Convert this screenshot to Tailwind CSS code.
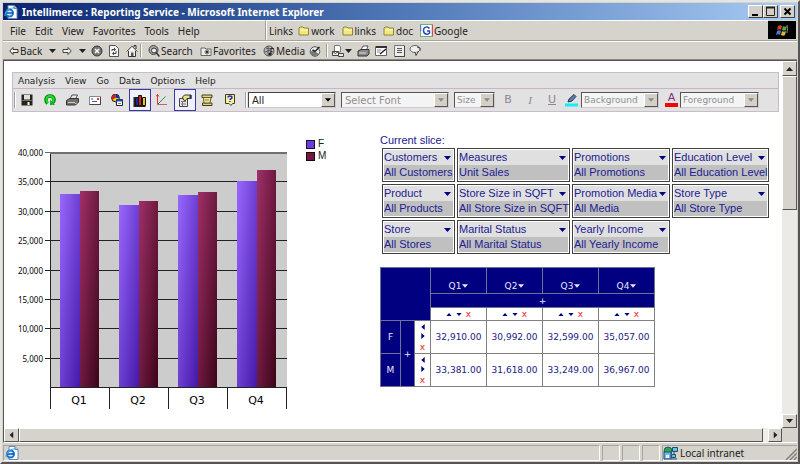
<!DOCTYPE html>
<html lang="en">
<head>
  <meta charset="UTF-8" />
  <title>Intellimerce : Reporting Service</title>
  <meta name="viewport" content="width=device-width, initial-scale=1.0" />
  <script src="https://cdn.jsdelivr.net/npm/@tailwindcss/browser@4"></script>
</head>
<body class="bg-[#d6d3cc] font-['Noto_Sans',sans-serif] text-[10px] leading-[14px] text-[#222]">

  <!-- shared glyphs -->
  <svg class="hidden">
    <symbol id="down" viewBox="0 0 7 4"><path d="M0 0h7L3.500 4z" fill="currentColor" /></symbol>
    <symbol id="folder" viewBox="0 0 12 10">
      <path d="M1 2l1-1h3l1 1h4.500v7H1z" fill="#f0e878" stroke="#8a8440" />
      <path d="M2 4h8" stroke="#fffbc8" />
    </symbol>
    <symbol id="page" viewBox="0 0 14 14">
      <path d="M4 .5h6l3 3v10H4z" fill="#fff" stroke="#6d86b8" />
      <path d="M10 .5v3h3" fill="#b8cbe8" stroke="#6d86b8" />
      <circle cx="5.500" cy="8" r="3.500" fill="#d8f0ff" stroke="#1878d0" stroke-width="2" />
      <path d="M3 8h6" stroke="#1050a8" stroke-width="1.500" />
      <path d="M1 11C0 7 6 2 11 3" fill="none" stroke="#48a8e8" />
    </symbol>
  </svg>

  <div class="flex flex-col min-h-screen border-2 border-t-[#e6e4de] border-l-[#e6e4de] border-r-[#555] border-b-[#555] p-px">

    <!-- title bar -->
    <header class="flex items-center h-[17px] pl-px pr-[2px] bg-linear-to-r from-[#0c2470] via-[#5078b8] to-[#a8ccf4] text-white">
      <svg class="size-[14px] mr-[4px]"><use href="#page" /></svg>
      <h1 class="flex-1 font-bold text-[10px]">Intellimerce : Reporting Service - Microsoft Internet Explorer</h1>
      <button aria-label="Minimize" class="w-[15px] h-[13px] bg-[#d4d0c8] border border-t-white border-l-white border-r-[#404040] border-b-[#404040]">
        <svg viewBox="0 0 13 11" class="block"><path d="M3 9h6" stroke="#000" stroke-width="2" /></svg>
      </button>
      <button aria-label="Maximize" class="w-[15px] h-[13px] bg-[#d4d0c8] border border-t-white border-l-white border-r-[#404040] border-b-[#404040]">
        <svg viewBox="0 0 13 11" class="block"><path d="M2.500 1v8.500h8V1M2 1.500h9" fill="none" stroke="#222" /><path d="M2 1.500h9" stroke="#222" stroke-width="2" /></svg>
      </button>
      <button aria-label="Close" class="w-[15px] h-[13px] ml-[2px] bg-[#d4d0c8] border border-t-white border-l-white border-r-[#404040] border-b-[#404040]">
        <svg viewBox="0 0 13 11" class="block"><path d="M3.500 2.500l6 6M9.500 2.500l-6 6" stroke="#000" stroke-width="2" /></svg>
      </button>
    </header>

    <!-- browser menu and links -->
    <div class="flex items-stretch h-[21px] border-b border-[#a8a49c]">
      <nav class="flex items-center w-[263px] pl-[7px] gap-[9px] border-t border-white border-r border-r-[#a09c94]">
        <button>File</button><button>Edit</button><button>View</button><button>Favorites</button><button>Tools</button><button>Help</button>
      </nav>
      <nav class="flex items-center flex-1 pl-[2px] gap-[7px] border-t border-l border-white">
        <span class="-mr-[2px]">Links</span>
        <a href="#" class="flex items-center gap-px"><svg class="w-[12px] h-[10px]"><use href="#folder" /></svg>work</a>
        <a href="#" class="flex items-center gap-px"><svg class="w-[12px] h-[10px]"><use href="#folder" /></svg>links</a>
        <a href="#" class="flex items-center gap-px"><svg class="w-[12px] h-[10px]"><use href="#folder" /></svg>doc</a>
        <a href="#" class="flex items-center gap-px">
          <svg class="size-[13px]" viewBox="0 0 13 13"><rect x=".5" y=".5" width="12" height="12" fill="#fff" stroke="#6cb46c" /><path d="M12.500 1v11" stroke="#e04848" stroke-width="1.500" /><path d="M.5 1v6" stroke="#5878d8" stroke-width="1.500" /><path d="M9.500 4.500C8 2.200 3.500 2.500 3.500 6.500s4.500 4.500 6 2.500V7H7" fill="none" stroke="#2848c0" stroke-width="1.500" /></svg>
          Google</a>
      </nav>
      <div class="flex items-center justify-center w-[28px] my-px mr-px bg-black">
        <svg class="w-[14px] h-[12px]" viewBox="0 0 14 12">
          <path d="M3 2q2-1.500 4 0l-1 4q-2-1.500-4 0z" fill="#c84830" /><path d="M8 2q2 1.500 4 0l-1 4q-2 1.500-4 0z" fill="#58a048" />
          <path d="M2 7q2-1.500 4 0l-1 4q-2-1.500-4 0z" fill="#4878d0" /><path d="M7 7q2 1.500 4 0l-1 4q-2 1.500-4 0z" fill="#d8b838" />
          <path d="M12 1q1 3 0 8" fill="none" stroke="#888" />
        </svg>
      </div>
    </div>

    <!-- browser buttons -->
    <div class="flex items-center h-[19px] pl-[6px] border-t border-t-white border-b border-b-[#8c8880]">
      <button class="flex items-center gap-px w-[38px]">
        <svg class="w-[10px] h-[8px]" viewBox="0 0 10 8"><path d="M4 .5L.8 4 4 7.500V5.500h5v-3H4z" fill="#f4f2ee" stroke="#333" /></svg>Back
      </button>
      <button aria-label="Back list" class="w-[15px]"><svg class="w-[7px] h-[4px] ml-[2px]"><use href="#down" /></svg></button>
      <button aria-label="Forward" class="w-[15px]"><svg class="w-[10px] h-[8px]" viewBox="0 0 10 8"><path d="M6 .5L9.200 4 6 7.500V5.500H1v-3h5z" fill="#f4f2ee" stroke="#444" /></svg></button>
      <button aria-label="Forward list" class="w-[14px]"><svg class="w-[7px] h-[4px] ml-[2px]"><use href="#down" /></svg></button>
      <button aria-label="Stop" class="w-[18px]"><svg class="size-[12px]" viewBox="0 0 12 12"><circle cx="6" cy="6" r="5" fill="#777" stroke="#333" /><path d="M4 4l4 4M8 4L4 8" stroke="#fff" stroke-width="1.500" /></svg></button>
      <button aria-label="Refresh" class="w-[17px]"><svg class="w-[10px] h-[12px]" viewBox="0 0 10 12"><path d="M.5.5h6l3 3v8h-9z" fill="#f6f6f4" stroke="#555" /><path d="M3 6V4.500h3M5 3l1.500 1.500L5 6M7 6v2.500H4M5 7L3.500 8.500 5 10" fill="none" stroke="#444" /></svg></button>
      <button aria-label="Home" class="w-[14px]"><svg class="size-[12px]" viewBox="0 0 12 12"><path d="M8 2V.5h2V4" fill="none" stroke="#333" /><path d="M.8 6.500L6 1.200l5.200 5.300M2.500 6v5.500h7V6" fill="#f6f6f4" stroke="#333" /><path d="M5 11V7.500h2.500V11z" fill="#555" /></svg></button>
      <span class="w-[2px] h-[13px] mr-[6px] border-l border-[#a09c94] border-r border-r-white"></span>
      <button class="flex items-center gap-px w-[52px]">
        <svg class="size-[12px] shrink-0" viewBox="0 0 12 12"><circle cx="5.500" cy="5" r="4.500" fill="#aaa" stroke="#444" /><circle cx="6" cy="5.500" r="2.500" fill="#eee" stroke="#333" /><path d="M8 7.500l3.500 4" stroke="#333" stroke-width="1.500" /></svg>Search
      </button>
      <button class="flex items-center gap-px w-[63px]">
        <svg class="w-[12px] h-[10px] shrink-0" viewBox="0 0 12 10"><path d="M1 2h4l1 1h5v6.500H1z" fill="#eee" stroke="#666" /><path d="M7 3.500v5M4.500 6h5M5.500 4.500l3 3M8.500 4.500l-3 3" stroke="#333" /></svg>Favorites
      </button>
      <button class="flex items-center gap-px w-[46px]">
        <svg class="size-[12px] shrink-0" viewBox="0 0 12 12"><circle cx="6" cy="6" r="5" fill="#bbb" stroke="#555" /><path d="M3 3q3 2 6 0M2 7q4-3 8 0M5 1v10" fill="none" stroke="#555" /><path d="M8 3v6M8 3l3 1" stroke="#222" /><circle cx="7" cy="9" r="1.500" fill="#222" /></svg>Media
      </button>
      <button aria-label="History" class="w-[17px]"><svg class="size-[12px]" viewBox="0 0 12 12"><circle cx="6" cy="6.500" r="4.800" fill="#eee" stroke="#555" /><path d="M1 6a5 5 0 0 0 9 3L6 6.500z" fill="#777" /><path d="M6 6.500L10.500 2M6 6.500L3.500 5" stroke="#222" stroke-width="1.500" /></svg></button>
      <span class="w-[2px] h-[13px] mr-[4px] border-l border-[#a09c94] border-r border-r-white"></span>
      <button class="flex items-center gap-px w-[25px]" aria-label="Mail">
        <svg class="size-[12px]" viewBox="0 0 12 12"><path d="M2.500.5h5l1 1.500v5h-6z" fill="#fff" stroke="#777" /><path d="M.5 6.500h6v4h-6zM6.500 8.500h5v3h-5z" fill="#eee" stroke="#444" /><path d="M.5 6.500l3 2 3-2" fill="none" stroke="#444" /></svg>
        <svg class="w-[7px] h-[4px]"><use href="#down" /></svg>
      </button>
      <button aria-label="Print" class="w-[18px]"><svg class="w-[13px] h-[12px]" viewBox="0 0 13 12"><path d="M4 5l2-4h5L9.500 5z" fill="#fff" stroke="#555" /><path d="M1 6l3-1.500h8V9l-2 2H1z" fill="#888" stroke="#333" /><path d="M2 8h7" stroke="#ddd" /></svg></button>
      <button aria-label="Edit" class="w-[19px]"><svg class="w-[13px] h-[11px]" viewBox="0 0 13 11"><path d="M.5 1.500h11v9H.5z" fill="#fff" stroke="#666" /><path d="M1 2h11" stroke="#333" stroke-width="2" /><path d="M2 5h4M2 7h3" stroke="#888" /><path d="M5 9l6-5" stroke="#222" stroke-width="1.500" /></svg></button>
      <button aria-label="Discuss" class="w-[15px]"><svg class="w-[11px] h-[12px]" viewBox="0 0 11 12"><path d="M.5.5h10v11H.5z" fill="#eee" stroke="#777" /><path d="M10.500 1v10.500H1" fill="none" stroke="#444" /><path d="M3 3.500h5M3 5.500h5M3 7.500h5" stroke="#555" /></svg></button>
      <button aria-label="Messenger"><svg class="w-[13px] h-[11px]" viewBox="0 0 13 11"><ellipse cx="6" cy="4" rx="5" ry="3.500" fill="#eee" stroke="#666" /><path d="M6 7l1 3.500L9.500 6M8 2l3 1v3" fill="#ccc" stroke="#444" /></svg></button>
    </div>

    <!-- viewport -->
    <div class="flex flex-1 border-l border-t border-[#555] bg-white">
      <main class="flex-1 min-w-0 pt-[11px] pl-[8px] pr-[3px]">

        <div class="bg-[#e2e2e2] border border-[#c8bcc8] font-['DejaVu_Sans',sans-serif]">
          <nav class="flex items-center h-[16px] pl-[5px] gap-[10px] text-[9px] border-b border-[#c8b4c4]">
            <button>Analysis</button><button>View</button><button>Go</button><button>Data</button><button>Options</button><button>Help</button>
          </nav>
          <div class="flex items-center h-[22px]">
            <span class="w-[2px] h-[16px] ml-px border-l border-[#a0a0a0] border-r border-r-white"></span>
            <div class="grid grid-cols-10 w-[225px] h-full">
              <button aria-label="Save" class="flex items-center justify-center"><svg class="size-[12px]" viewBox="0 0 12 12"><path d="M.5.500h11v11H.5z" fill="#222" /><path d="M3 1h6v4.500H3z" fill="#e0e0e0" /><path d="M1 6.500h10" stroke="#7a7040" /><path d="M6.500 8h2v3h-2z" fill="#fff" /></svg></button>
              <button aria-label="Refresh" class="flex items-center justify-center"><svg class="size-[12px]" viewBox="0 0 12 12"><path d="M3.500 9.500C1 7 1.500 2 6 2s5 5 2.500 7" fill="none" stroke="#087808" stroke-width="3.500" /><path d="M3.500 9C1.500 6.500 2 2 6 2s4.500 4.500 2.500 6.500" fill="none" stroke="#18e028" stroke-width="2" /><path d="M6 5.500V11h5z" fill="#10b820" /></svg></button>
              <button aria-label="Print" class="flex items-center justify-center"><svg class="w-[13px] h-[12px]" viewBox="0 0 13 12"><path d="M4 5l2-4h5.500L9.500 5z" fill="#fff" stroke="#444" /><path d="M.5 6.500l3-2h9V8l-3 3H.5z" fill="#707070" stroke="#333" /><path d="M2 8.500h7M6 3h3" stroke="#ccc" /><path d="M9 9.500h1.500" stroke="#d8d060" /></svg></button>
              <button aria-label="Mail" class="flex items-center justify-center"><svg class="w-[12px] h-[9px]" viewBox="0 0 12 9"><path d="M.5.5h11v8H.5z" fill="#fff" stroke="#888" /><path d="M.5 8.500h11V1" fill="none" stroke="#444" /><path d="M2 3h2M3 5.500h5" stroke="#4858c8" /><path d="M8 2h2v2H8z" fill="#d83838" /></svg></button>
              <button aria-label="Cube" class="flex items-center justify-center"><svg class="size-[12px]" viewBox="0 0 12 12"><circle cx="4.500" cy="4" r="3.800" fill="#e8d818" stroke="#111" /><path d="M4.500 4V.2A3.800 3.800 0 0 0 1 6z" fill="#d82020" /><path d="M4.500 4V.2A3.800 3.800 0 0 1 8.300 4z" fill="#1830a8" /><path d="M5.500 5.500h6v6h-6z" fill="#fff" stroke="#223" /><path d="M5.500 6.500h6" stroke="#2848b8" stroke-width="2" /><path d="M7 9.500h3" stroke="#888" /></svg></button>
              <button aria-label="Chart" class="flex items-center justify-center bg-[#f0f0fa] border border-[#3838a8]"><svg class="w-[14px] h-[13px]" viewBox="0 0 14 13"><path d="M1.500 3v9h11" fill="none" stroke="#222" stroke-width="2" /><path d="M2.500 3.500h3v8h-3z" fill="#1828a8" stroke="#111" /><path d="M5.500 1.500h3v10h-3z" fill="#d82020" stroke="#111" /><path d="M9.500 3.500h3v8h-3z" fill="#e8c820" stroke="#111" /></svg></button>
              <button aria-label="Axes" class="flex items-center justify-center"><svg class="size-[12px]" viewBox="0 0 12 12"><path d="M1.500 0v10.500" stroke="#e83030" /><path d="M1.500 10.500H11" stroke="#d05878" /><path d="M2 10l7.500-7.500" stroke="#289048" /><path d="M0 2.500L1.500.5 3 2.500" fill="none" stroke="#e83030" /></svg></button>
              <button aria-label="Properties" class="flex items-center justify-center bg-[#f0f0fa] border border-[#3838a8]"><svg class="w-[14px] h-[13px]" viewBox="0 0 14 13"><path d="M1.500 4.500h8v8h-8z" fill="#e8e8e8" stroke="#444" /><path d="M3 7.500h5M3 10h5M4.500 7v5" stroke="#777" /><path d="M4.500 3l2-2h6.500v3.500H9L7 7 5.500 6z" fill="#e8e090" stroke="#443c10" /><path d="M12.500 1v4" stroke="#223070" stroke-width="2" /></svg></button>
              <button aria-label="Script" class="flex items-center justify-center"><svg class="size-[12px]" viewBox="0 0 12 12"><path d="M1 1h10v2.500H1zM1.500 9h9.500v2.500H1.500z" fill="#e0d878" stroke="#443c18" /><path d="M2.500 3.500H10l-1 5.500H3z" fill="#f0e8a8" stroke="#665c30" /><path d="M4 6h4" stroke="#887c40" /></svg></button>
              <button aria-label="Help" class="flex items-center justify-center"><svg class="size-[12px]" viewBox="0 0 12 12"><path d="M1.500.5h9v9H8.500L7 11.500 5 9.500H1.500z" fill="#f4f0a8" stroke="#443c18" /><path d="M4 3.500C4 1.500 8 1.500 8 3.500 8 5 6 4.500 6 6" fill="none" stroke="#2030b0" stroke-width="1.500" /><path d="M5.200 7.500h1.500" stroke="#2030b0" /></svg></button>
            </div>
            <span class="w-[2px] h-[16px] ml-[4px] mr-px border-l border-[#a0a0a0] border-r border-r-white"></span>

            <div class="relative w-[88px] mr-[5px]">
              <select aria-label="Style" class="appearance-none block w-full h-[16px] pl-[3px] bg-white border border-[#444] border-r-[#ccc] border-b-[#ccc] leading-[13px]"><option>All</option></select>
              <span class="absolute right-px top-px flex items-center justify-center w-[14px] h-[14px] bg-[#d4d0c8] border border-white border-r-[#555] border-b-[#555] pointer-events-none text-black"><svg class="w-[6px] h-[4px]"><use href="#down" /></svg></span>
            </div>
            <div class="relative w-[108px] mr-[5px]">
              <select aria-label="Font" disabled class="appearance-none block w-full h-[16px] pl-[3px] bg-[#f4f4f4] text-[#909090] border border-[#555] border-r-[#ccc] border-b-[#ccc] leading-[13px]"><option>Select Font</option></select>
              <span class="absolute right-px top-px flex items-center justify-center w-[14px] h-[14px] bg-[#d4d0c8] border border-white border-r-[#555] border-b-[#555] pointer-events-none text-[#888]"><svg class="w-[6px] h-[4px]"><use href="#down" /></svg></span>
            </div>
            <div class="relative w-[41px] mr-[2px]">
              <select aria-label="Size" disabled class="appearance-none block w-full h-[16px] pl-[2px] bg-[#f4f4f4] text-[#909090] border border-[#555] border-r-[#ccc] border-b-[#ccc] text-[9px] leading-[13px]"><option>Size</option></select>
              <span class="absolute right-px top-px flex items-center justify-center w-[14px] h-[14px] bg-[#d4d0c8] border border-white border-r-[#555] border-b-[#555] pointer-events-none text-[#888]"><svg class="w-[6px] h-[4px]"><use href="#down" /></svg></span>
            </div>
            <button class="w-[22px] text-[11px] text-[#8c8890]">B</button>
            <button class="w-[22px] text-[11px] text-[#8c8890] italic font-['Liberation_Serif',serif]">I</button>
            <button class="w-[22px] text-[11px] text-[#8c8890] underline">U</button>
            <button aria-label="Highlight" class="w-[18px]"><svg class="w-[13px] h-[13px] ml-[2px]" viewBox="0 0 13 13"><path d="M0 9.500h13v3H0z" fill="#10f0f8" /><path d="M3 8l1-3 5-4.500 2 2L7 7z" fill="#6080a8" stroke="#223858" /></svg></button>
            <div class="relative w-[78px] mr-[6px]">
              <select aria-label="Background" disabled class="appearance-none block w-full h-[16px] pl-[2px] bg-[#f4f4f4] text-[#909090] border border-[#555] border-r-[#ccc] border-b-[#ccc] text-[9px] leading-[13px]"><option>Background</option></select>
              <span class="absolute right-px top-px flex items-center justify-center w-[14px] h-[14px] bg-[#d4d0c8] border border-white border-r-[#555] border-b-[#555] pointer-events-none text-[#888]"><svg class="w-[6px] h-[4px]"><use href="#down" /></svg></span>
            </div>
            <button class="w-[13px] h-[14px] mr-[2px] border-b-4 border-[#f00808] text-[11px] leading-[10px] text-[#803080]">A</button>
            <div class="relative w-[79px]">
              <select aria-label="Foreground" disabled class="appearance-none block w-full h-[16px] pl-[2px] bg-[#f4f4f4] text-[#909090] border border-[#555] border-r-[#ccc] border-b-[#ccc] text-[9px] leading-[13px]"><option>Foreground</option></select>
              <span class="absolute right-px top-px flex items-center justify-center w-[14px] h-[14px] bg-[#d4d0c8] border border-white border-r-[#555] border-b-[#555] pointer-events-none text-[#888]"><svg class="w-[6px] h-[4px]"><use href="#down" /></svg></span>
            </div>
          </div>
        </div>

        <div class="flex items-start">
          <!-- bar chart -->
          <svg id="chart" class="w-[276px] h-[270px] mt-[31px] shrink-0" viewBox="0 0 276 270" font-family="Noto Sans, sans-serif">
            <defs>
              <linearGradient id="female" x1="0" y1="0" x2="1" y2="1"><stop offset="0" stop-color="#9868fc" /><stop offset="1" stop-color="#4418a8" /></linearGradient>
              <linearGradient id="male" x1="0" y1="0" x2="1" y2="1"><stop offset="0" stop-color="#a03068" /><stop offset="1" stop-color="#3c0418" /></linearGradient>
            </defs>
            <rect x="38" y="9" width="237" height="235" fill="#cccccc" />
          </svg>

          <!-- legend -->
          <ul class="mt-[26px] ml-[18px] w-[74px] shrink-0 font-['Liberation_Sans',sans-serif] text-[10px] leading-[12px]">
            <li class="flex items-center gap-[3px]"><span class="size-[9px] bg-[#6c40d8] border border-[#181030]"></span>F</li>
            <li class="flex items-center gap-[3px]"><span class="size-[9px] bg-[#701840] border border-[#200410]"></span>M</li>
          </ul>

          <div class="mt-[21px]">
            <h2 class="font-['Liberation_Sans',sans-serif] text-[11px] leading-[14px] text-[#202090]">Current slice:</h2>
            <div id="slicers" class="grid grid-cols-[73px_113px_98px_97px] gap-[2px] pl-[2px] mt-px font-['Liberation_Sans',sans-serif] text-[11px] leading-[15px] text-[#202090]"></div>

            <table class="mt-[13px] border-collapse table-fixed w-[274px] font-['DejaVu_Sans',sans-serif] text-[9px] leading-[10px] text-center text-[#202080]">
              <colgroup><col class="w-[20px]" /><col class="w-[14px]" /><col class="w-[16px]" /><col class="w-[56px]" /><col class="w-[56px]" /><col class="w-[56px]" /><col class="w-[56px]" /></colgroup>
              <thead>
                <tr id="quarters" class="h-[26px] bg-[#000080] text-[#e8e8f8]"><td colspan="3" rowspan="3" class="border border-[#707090]"></td></tr>
                <tr class="h-[14px] bg-[#000080] text-[#e8e8f8]"><td colspan="4" class="border border-[#707090]"><button class="block mx-auto">+</button></td></tr>
                <tr id="sorters" class="h-[13px]"></tr>
              </thead>
              <tbody id="rows"></tbody>
            </table>
          </div>
        </div>
      </main>

      <!-- vertical scroll bar -->
      <div class="flex flex-col w-[15px] bg-[#eceae6]">
        <button aria-label="Scroll up" class="flex items-center justify-center h-[15px] bg-[#d6d3cc] border border-white border-r-[#555] border-b-[#555]"><svg class="w-[7px] h-[4px] rotate-180"><use href="#down" /></svg></button>
        <div class="h-[134px] bg-[#d6d3cc] border border-white border-r-[#555] border-b-[#555]"></div>
        <div class="flex-1"></div>
        <button aria-label="Scroll down" class="flex items-center justify-center h-[14px] bg-[#d6d3cc] border border-white border-r-[#555] border-b-[#555]"><svg class="w-[7px] h-[4px]"><use href="#down" /></svg></button>
      </div>
    </div>

    <!-- horizontal scroll bar -->
    <div class="flex h-[15px] border-l border-l-[#555] border-b border-b-white bg-[#f0eeea]">
      <button aria-label="Scroll left" class="flex items-center justify-center w-[15px] bg-[#d6d3cc] border border-white border-r-[#555] border-b-[#555]"><svg class="w-[7px] h-[4px] rotate-90"><use href="#down" /></svg></button>
      <div class="flex-1 bg-[#d6d3cc] border border-white border-r-[#555] border-b-[#555]"></div>
      <div class="w-[5px]"></div>
      <button aria-label="Scroll right" class="flex items-center justify-center w-[14px] bg-[#d6d3cc] border border-white border-r-[#555] border-b-[#555]"><svg class="w-[7px] h-[4px] -rotate-90"><use href="#down" /></svg></button>
      <div class="w-[15px] bg-[#d6d3cc]"></div>
    </div>

    <!-- status bar -->
    <footer class="flex gap-[2px] h-[18px] pt-[2px]">
      <div class="flex-1 flex items-center border border-[#a8a49c] border-b-white border-r-white"><svg class="size-[14px] ml-px"><use href="#page" /></svg></div>
      <div class="w-[18px] border border-[#a8a49c] border-b-white border-r-white"></div>
      <div class="w-[18px] border border-[#a8a49c] border-b-white border-r-white"></div>
      <div class="w-[18px] border border-[#a8a49c] border-b-white border-r-white"></div>
      <div class="flex items-center w-[135px] gap-[2px] border border-[#a8a49c] border-b-white border-r-0">
        <svg class="w-[15px] h-[14px]" viewBox="0 0 15 14"><circle cx="5" cy="5" r="4" fill="#30a848" stroke="#185878" /><path d="M1 6h7v7H1z" fill="#70b8f0" stroke="#204878" /><path d="M9.500 1.500h5v4h-5zM8.500 8.500h4v3h-4z" fill="#58c8e8" stroke="#284868" /><path d="M11 6v2M8 13h6" stroke="#284868" /><path d="M3 9h3v3H3z" fill="#e8f4ff" /></svg>
        <span class="flex-1">Local intranet</span>
        <svg class="size-[12px] self-end" viewBox="0 0 12 12"><path d="M1 12L12 1M5 12l7-7M9 12l3-3" stroke="#85817a" stroke-width="1.500" /></svg>
      </div>
    </footer>
  </div>

  <script>
    const quarters = ["Q1", "Q2", "Q3", "Q4"];
    const sales = { F: [32910, 30992, 32599, 35057], M: [33381, 31618, 33249, 36967] };
    const slicers = [
      ["Customers", "All Customers"], ["Measures", "Unit Sales"], ["Promotions", "All Promotions"], ["Education Level", "All Education Level"],
      ["Product", "All Products"], ["Store Size in SQFT", "All Store Size in SQFT"], ["Promotion Media", "All Media"], ["Store Type", "All Store Type"],
      ["Store", "All Stores"], ["Marital Status", "All Marital Status"], ["Yearly Income", "All Yearly Income"]
    ];

    document.getElementById("slicers").innerHTML = slicers.map(([name, value]) => `
      <div class="border border-[#404040] p-px whitespace-nowrap">
        <button class="flex items-center justify-between w-full pr-[2px] bg-[#e0e0e0]">${name}<svg class="w-[7px] h-[4px] shrink-0 text-[#000080]"><use href="#down" /></svg></button>
        <div class="bg-[#c0c0c0]">${value}</div>
      </div>`).join("");

    // chart: 40,000 units over 235px, one 59px band per quarter
    let svg = "";
    for (let v = 40000; v > 0; v -= 5000) {
      const y = Math.round(244 - v * 235 / 40000);
      svg += `<path d="M33 ${y}.5H275" stroke="${v == 40000 ? "#666" : "#222"}" />
        <text x="31" y="${y + 4}" font-size="8" text-anchor="end">${v.toLocaleString("en-US")}</text>`;
    }
    quarters.forEach((q, i) => {
      const x = 38 + i * 59;
      const f = Math.round(sales.F[i] * 235 / 40000);
      const m = Math.round(sales.M[i] * 235 / 40000);
      svg += `<rect x="${x + 10}" y="${244 - f}" width="20" height="${f}" fill="url(#female)" />
        <rect x="${x + 30}" y="${244 - m}" width="19" height="${m}" fill="url(#male)" />
        <path d="M${x}.5 244V266" stroke="#222" />
        <text x="${x + 29}" y="261" font-size="11" text-anchor="middle" font-family="DejaVu Sans, sans-serif">${q}</text>`;
    });
    svg += `<path d="M38.500 9V244.500H275M274.500 244V266" fill="none" stroke="#222" /><path d="M38 10H275" stroke="#707070" stroke-width="2" />`;
    document.getElementById("chart").insertAdjacentHTML("beforeend", svg);

    document.getElementById("quarters").insertAdjacentHTML("beforeend", quarters.map(q => `
      <th class="border border-[#707090] font-normal align-bottom pb-[2px]"><button class="inline-flex items-center gap-px">${q}<svg class="w-[6px] h-[4px]"><use href="#down" /></svg></button></th>`).join(""));

    document.getElementById("sorters").innerHTML = quarters.map(() => `
      <td class="border border-[#808080]"><div class="flex items-center justify-center gap-[4px] h-[10px] text-[#000080]">
        <svg class="w-[6px] h-[3px] rotate-180"><use href="#down" /></svg><svg class="w-[6px] h-[3px]"><use href="#down" /></svg><button class="text-[#f02020]">x</button>
      </div></td>`).join("");

    document.getElementById("rows").innerHTML = Object.keys(sales).map((k, i) => `
      <tr class="h-[33px]">
        <th class="border border-[#707090] bg-[#000080] text-[#e8e8f8] font-normal">${k}</th>
        ${i == 0 ? `<td rowspan="2" class="border border-[#707090] bg-[#000080] text-[#e8e8f8]"><button>+</button></td>` : ""}
        <td class="border border-[#808080]"><div class="flex flex-col items-center justify-between h-[28px] pt-[2px] text-[#000080]">
          <svg class="w-[6px] h-[4px] rotate-90"><use href="#down" /></svg><svg class="w-[6px] h-[4px] -rotate-90"><use href="#down" /></svg><button class="text-[#f02020] leading-[8px]">x</button>
        </div></td>
        ${sales[k].map(n => `<td class="border border-[#808080]">${n.toLocaleString("en-US", { minimumFractionDigits: 2 })}</td>`).join("")}
      </tr>`).join("");
  </script>
</body>
</html>
